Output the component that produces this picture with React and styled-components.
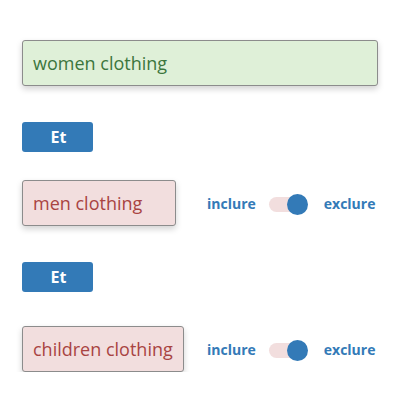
import React, { useState } from "react";
import styled, { createGlobalStyle } from "styled-components";

const GlobalStyle = createGlobalStyle`
  body {
    margin: 0;
    background: #fff;
    font-family: "Open Sans", "Liberation Sans", sans-serif;
  }
`;

const Page = styled.div`
  padding: 40px 22px 0 22px;
  display: flex;
  flex-direction: column;
  align-items: flex-start;
`;

const Tag = styled.div`
  box-sizing: border-box;
  display: inline-flex;
  align-items: center;
  height: 46px;
  min-width: 154px;
  padding: 0 10px;
  font-size: 18px;
  border: 1px solid #8c8c8c;
  border-radius: 3px;
  box-shadow: 0 3px 6px rgba(0, 0, 0, 0.18);
  background: ${(p) => (p.$variant === "include" ? "#dff0d8" : "#f2dede")};
  color: ${(p) => (p.$variant === "include" ? "#3c763d" : "#a94442")};
  width: ${(p) => (p.$full ? "356px" : "auto")};
`;

const AndButton = styled.button`
  width: 71px;
  height: 30px;
  margin: ${(p) => p.$margin};
  border: none;
  border-radius: 3px;
  background: #337ab7;
  color: #fff;
  font-family: inherit;
  font-weight: 700;
  font-size: 16px;
  padding: 0 0 0 2px;
`;

const Row = styled.div`
  display: grid;
  grid-template-columns: 185px auto;
  align-items: center;
  width: 100%;
`;

const Switcher = styled.div`
  display: flex;
  align-items: center;
  font-size: 14px;
  font-weight: 700;
  color: #337ab7;
`;

const Track = styled.div`
  position: relative;
  width: 38px;
  height: 15px;
  border-radius: 8px;
  background: #f2dede;
  margin: 2px 17px 0 13px;
  cursor: pointer;
`;

const Knob = styled.div`
  position: absolute;
  top: -3px;
  left: ${(p) => (p.$on ? "18px" : "0")};
  width: 21px;
  height: 21px;
  border-radius: 50%;
  background: #337ab7;
  transition: left 0.2s;
`;

const Toggle = () => {
  const [on, setOn] = useState(true);
  return (
    <Switcher>
      <span>inclure</span>
      <Track onClick={() => setOn(!on)}>
        <Knob $on={on} />
      </Track>
      <span>exclure</span>
    </Switcher>
  );
};

const App = () => {
  return (
    <>
      <GlobalStyle />
      <Page>
        <Tag $variant="include" $full>
          women clothing
        </Tag>
        <AndButton $margin="36px 0 28px">Et</AndButton>
        <Row>
          <div>
            <Tag $variant="exclude">men clothing</Tag>
          </div>
          <Toggle />
        </Row>
        <AndButton $margin="36px 0 34px">Et</AndButton>
        <Row>
          <div>
            <Tag $variant="exclude">children clothing</Tag>
          </div>
          <Toggle />
        </Row>
      </Page>
    </>
  );
};

export default App;
